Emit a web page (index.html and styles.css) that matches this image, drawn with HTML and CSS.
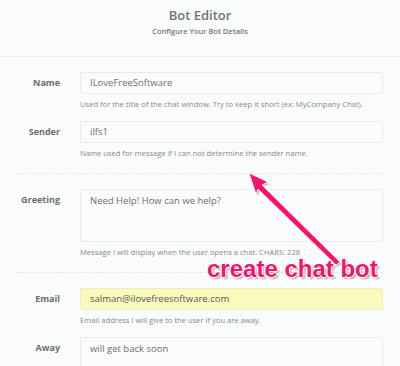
FILE: index.html
```html
<!DOCTYPE html>
<html lang="en">

<head>
    <meta charset="UTF-8">
    <meta name="viewport" content="width=device-width, initial-scale=1.0">
    <title>Bot Editor</title>
    <link rel="stylesheet" href="styles.css">
</head>

<body>

    <div class="page-header">
        <h1>Bot Editor</h1>
        <p>Configure Your Bot Details</p>
    </div>

    <div class="editor-form">
        <div class="form-section">
            <div class="form-row">
                <label class="field-label">Name</label>
                <div class="field">
                    <div class="text-input">ILoveFreeSoftware</div>
                    <p class="help">Used for the title of the chat window. Try to keep it short (ex: MyCompany Chat).</p>
                </div>
            </div>
            <div class="form-row">
                <label class="field-label">Sender</label>
                <div class="field">
                    <div class="text-input">ilfs1</div>
                    <p class="help">Name used for message if I can not determine the sender name.</p>
                </div>
            </div>
        </div>

        <div class="form-section">
            <div class="form-row">
                <label class="field-label">Greeting</label>
                <div class="field">
                    <div class="text-input text-area">Need Help! How can we help?</div>
                    <p class="help">Message I will display when the user opens a chat. CHARS: 228</p>
                </div>
            </div>
        </div>

        <div class="form-section">
            <div class="form-row">
                <label class="field-label">Email</label>
                <div class="field">
                    <div class="text-input autofill">salman@ilovefreesoftware.com</div>
                    <p class="help">Email address I will give to the user if you are away.</p>
                </div>
            </div>
            <div class="form-row">
                <label class="field-label">Away</label>
                <div class="field">
                    <div class="text-input text-area">will get back soon</div>
                </div>
            </div>
        </div>
    </div>

    <!-- annotation drawn over the screenshot -->
    <svg class="note-arrow" width="400" height="366" viewBox="0 0 400 366">
        <g transform="translate(1.5,2)" fill="#9a9a9a" opacity="0.55">
            <path d="M249 173 L268 182 L262 185 L340 262 L336 265 L258 189 L256 194 Z" />
        </g>
        <path d="M249 173 L268 182 L262 185 L340 262 L336 265 L258 189 L256 194 Z" fill="#f5136b" stroke="#fff" stroke-width="0.8" />
    </svg>
    <div class="note-text">create chat bot</div>

</body>

</html>
```

FILE: styles.css
```css
body {
    font-family: "Open Sans", Arial, sans-serif;
    background-color: #fafbfb;
    color: #6b7177;
    margin: 0;
    padding: 0;
    width: 400px;
    height: 366px;
    overflow: hidden;
    position: relative;
}

.page-header {
    height: 57px;
    border-bottom: 1px solid #ececec;
    text-align: center;
    box-sizing: border-box;
    padding-top: 6px;
}

.page-header h1 {
    margin: 0;
    font-size: 13px;
    line-height: 18px;
    font-weight: 600;
    color: #6e737a;
}

.page-header p {
    margin: 1px 0 0;
    font-size: 7.5px;
    line-height: 12px;
    font-weight: 600;
    color: #74787d;
}

.editor-form {
    padding: 0 17px 0 16px;
}

.form-section {
    padding: 15px 0 14px;
    border-bottom: 1px dashed #e4e6e8;
    display: flex;
    flex-direction: column;
    gap: 11px;
}

.form-row {
    display: flex;
}

.field-label {
    width: 64px;
    flex-shrink: 0;
    box-sizing: border-box;
    padding-right: 20px;
    text-align: right;
    font-size: 9px;
    line-height: 22px;
    font-weight: 700;
    color: #6a6c70;
}

.field {
    flex: 1;
}

.text-input {
    height: 22px;
    box-sizing: border-box;
    border: 1px solid #e9eaeb;
    border-radius: 2px;
    background-color: #fbfbfb;
    padding: 0 9px;
    font-size: 9.5px;
    line-height: 20px;
    color: #6c6f73;
}

.text-area {
    height: 53px;
    padding-top: 1px;
}

.autofill {
    background-color: #fafabd;
    border-color: #ececc4;
    color: #55575a;
}

.help {
    margin: 4px 0 0;
    font-size: 7.6px;
    line-height: 12px;
    color: #858a8f;
}

.note-arrow {
    position: absolute;
    left: 0;
    top: 0;
    pointer-events: none;
}

.note-text {
    position: absolute;
    left: 207px;
    top: 259px;
    font-family: "Liberation Sans", Arial, sans-serif;
    font-size: 24px;
    line-height: 19px;
    font-weight: 700;
    color: #f5136b;
    text-shadow: 1px 0 0 #fff, -1px 0 0 #fff, 0 1px 0 #fff, 0 -1px 0 #fff, 2px 2px 2px rgba(0, 0, 0, 0.35);
}
```
